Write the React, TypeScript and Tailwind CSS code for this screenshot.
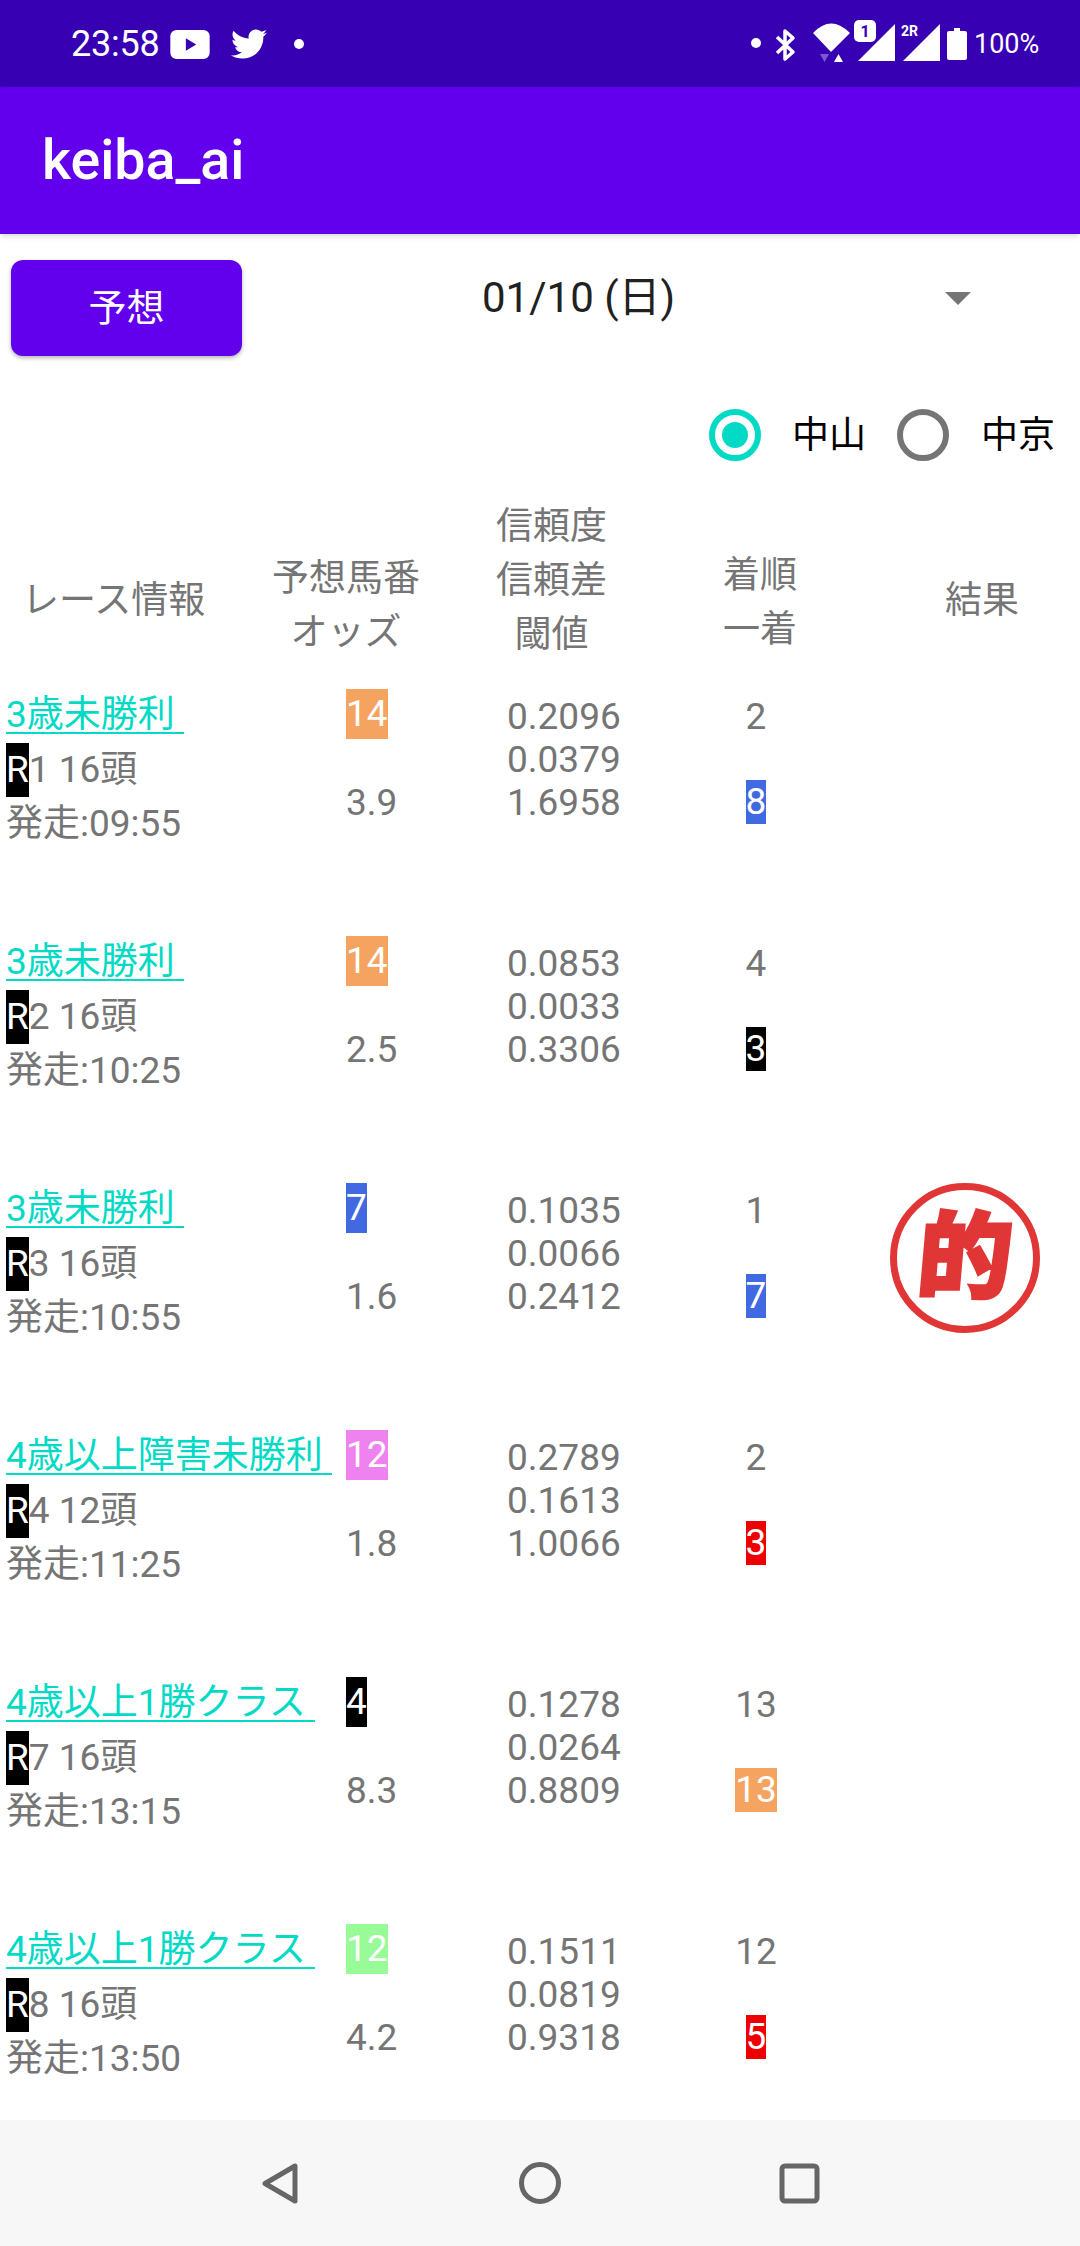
import { FaTwitter } from "react-icons/fa";

type Race = {
  name: string;
  round: string;
  start: string;
  pick: string;
  pickColor: string;
  odds: string;
  scores: string[];
  place: string;
  first: string;
  firstColor: string;
  hit?: boolean;
};

const races: Race[] = [
  { name: "3歳未勝利", round: "1 16頭", start: "発走:09:55", pick: "14", pickColor: "bg-[#f4a460]", odds: "3.9", scores: ["0.2096", "0.0379", "1.6958"], place: "2", first: "8", firstColor: "bg-[#4169e1]" },
  { name: "3歳未勝利", round: "2 16頭", start: "発走:10:25", pick: "14", pickColor: "bg-[#f4a460]", odds: "2.5", scores: ["0.0853", "0.0033", "0.3306"], place: "4", first: "3", firstColor: "bg-black" },
  { name: "3歳未勝利", round: "3 16頭", start: "発走:10:55", pick: "7", pickColor: "bg-[#4169e1]", odds: "1.6", scores: ["0.1035", "0.0066", "0.2412"], place: "1", first: "7", firstColor: "bg-[#4169e1]", hit: true },
  { name: "4歳以上障害未勝利", round: "4 12頭", start: "発走:11:25", pick: "12", pickColor: "bg-[#ee82ee]", odds: "1.8", scores: ["0.2789", "0.1613", "1.0066"], place: "2", first: "3", firstColor: "bg-[#ee0000]" },
  { name: "4歳以上1勝クラス", round: "7 16頭", start: "発走:13:15", pick: "4", pickColor: "bg-black", odds: "8.3", scores: ["0.1278", "0.0264", "0.8809"], place: "13", first: "13", firstColor: "bg-[#f4a460]" },
  { name: "4歳以上1勝クラス", round: "8 16頭", start: "発走:13:50", pick: "12", pickColor: "bg-[#98fb98]", odds: "4.2", scores: ["0.1511", "0.0819", "0.9318"], place: "12", first: "5", firstColor: "bg-[#ee0000]" },
];

function StatusBar() {
  return (
    <div className="flex h-[87px] shrink-0 items-center bg-[#3700b3] pl-[71px] text-white">
      <span className="w-[99px] text-[36px] leading-[42px] tracking-[-0.2px]">23:58</span>
      <svg width="40" height="29" viewBox="0 0 38 28" className="mt-[1px]">
        <path
          fillRule="evenodd"
          fill="#fff"
          d="M6 0h26a6 6 0 0 1 6 6v16a6 6 0 0 1-6 6H6a6 6 0 0 1-6-6V6a6 6 0 0 1 6-6ZM15 8v12l10-6Z"
        />
      </svg>
      <FaTwitter className="ml-[21px] text-[36px]" />
      <span className="ml-[27px] h-[10px] w-[10px] rounded-full bg-white" />
      <svg width="220" height="50" viewBox="750 18 220 50" className="ml-[445px] mt-[-1px]">
        <circle cx="757" cy="43" r="5" fill="#fff" />
        <path d="M778 37 794 52 786 59V31L794 38 778 53" fill="none" stroke="#fff" strokeWidth="3.5" strokeLinejoin="round" />
        <path d="M814 33Q832 14 851 33L832 52Z" fill="#fff" />
        <path d="M821 54h9l-4.500 8Z" fill="#fff" opacity="0.35" />
        <path d="M835 62h9l-4.500-8Z" fill="#fff" />
        <path d="M859 61 896 24V61Z" fill="#fff" />
        <rect x="855" y="20" width="22" height="22" rx="5" fill="#fff" />
        <text x="866" y="37" textAnchor="middle" fontSize="16" fontWeight="700" fill="#3700b3" fontFamily="Roboto">1</text>
        <path d="M904 61 941 24V61Z" fill="#fff" />
        <text x="902" y="36" fontSize="14" fontWeight="700" fill="#fff" fontFamily="Roboto">2R</text>
        <path d="M955 28h6v3h5a2 2 0 0 1 2 2v25a2 2 0 0 1-2 2h-16a2 2 0 0 1-2-2V33a2 2 0 0 1 2-2h5Z" fill="#fff" />
      </svg>
      <span className="ml-[5px] text-[27px] leading-[30px]">100%</span>
    </div>
  );
}

function Radio({ checked }: { checked?: boolean }) {
  return (
    <span className={`flex h-[52px] w-[52px] items-center justify-center rounded-full border-[6px] ${checked ? "border-[#03dac5]" : "border-[#757575]"}`}>
      {checked && <span className="h-[26px] w-[26px] rounded-full bg-[#03dac5]" />}
    </span>
  );
}

function HitStamp() {
  return (
    <div className="ml-[78px] mt-[3px] flex h-[150px] w-[150px] items-center justify-center rounded-full border-[7px] border-[#e03636]">
      <span className="-skew-x-[5deg] text-[94px] font-black leading-none text-[#e03636] [-webkit-text-stroke:3px_#e03636]">
        的
      </span>
    </div>
  );
}

function RaceRow({ race }: { race: Race }) {
  return (
    <div className="flex h-[247px] shrink-0 text-[37px] text-[#757575]">
      <div className="w-[346px] pl-[6px] pt-[2px] leading-[54.5px]">
        <div className="whitespace-pre text-[#03dac5] underline decoration-[2px] underline-offset-[5px]">{race.name} </div>
        <div className="flex">
          <span className="bg-black text-white">R</span>
          <span>{race.round}</span>
        </div>
        <div>{race.start}</div>
      </div>
      <div className="flex w-[161px] flex-col items-start pt-[3px]">
        <span className={`h-[50px] leading-[50px] text-white ${race.pickColor}`}>{race.pick}</span>
        <span className="mt-[42px] leading-[43px]">{race.odds}</span>
      </div>
      <div className="w-[193px] pt-[9px] leading-[43px]">
        {race.scores.map((score, i) => (
          <div key={i}>{score}</div>
        ))}
      </div>
      <div className="flex w-[112px] flex-col items-center pt-[9px]">
        <span className="leading-[43px]">{race.place}</span>
        <span className={`mt-[42px] h-[44px] leading-[44px] text-white ${race.firstColor}`}>{race.first}</span>
      </div>
      {race.hit && <HitStamp />}
    </div>
  );
}

export default function App() {
  return (
    <div className="flex h-[2246px] w-[1080px] flex-col overflow-hidden bg-white font-[Roboto,'Noto_Sans_CJK_JP',sans-serif]">
      <StatusBar />
      <header className="z-10 flex h-[147px] shrink-0 items-center bg-[#6200ee] pl-[42px] shadow-md">
        <h1 className="text-[55.5px] font-medium leading-[66px] text-white">keiba_ai</h1>
      </header>

      <div className="flex h-[175px] shrink-0 items-start pl-[11px] pt-[26px]">
        <button className="h-[96px] w-[231px] rounded-[12px] bg-[#6200ee] text-[38px] text-white shadow-[0_2px_4px_rgba(0,0,0,0.3)]">
          予想
        </button>
        <div className="ml-[241px] flex h-[76px] flex-1 items-center pr-[109px]">
          <span className="-ml-[1px] text-[42px] leading-[50px] text-[#212121]">01/10 (日)</span>
          <span className="ml-auto h-0 w-0 border-x-[13px] border-t-[13px] border-x-transparent border-t-[#757575]" />
        </div>
      </div>

      <div className="flex h-[89px] shrink-0 items-start justify-end pr-[25px] text-[37px] leading-[54px] text-black">
        <Radio checked />
        <span className="ml-[31px]">中山</span>
        <span className="ml-[31px]"><Radio /></span>
        <span className="ml-[32px]">中京</span>
      </div>

      <div className="flex h-[188px] shrink-0 whitespace-nowrap text-center text-[37px] leading-[54px] text-[#757575]">
        <div className="w-[274px] pl-[22px] pt-[76px] text-left">レース情報</div>
        <div className="w-[148px] -ml-[2px] pt-[54px]">予想馬番<br />オッズ</div>
        <div className="ml-[76px] w-[111px] pt-[2px]">信頼度<br />信頼差<br />閾値</div>
        <div className="ml-[115px] w-[76px] pt-[51px]">着順<br />一着</div>
        <div className="ml-[146px] w-[76px] pt-[76px]">結果</div>
      </div>

      <div className="flex min-h-0 flex-1 flex-col overflow-hidden">
        {races.map((race) => (
          <RaceRow key={race.round} race={race} />
        ))}
      </div>

      <nav className="flex h-[126px] shrink-0 items-center bg-[#f7f7f7]">
        <svg width="1080" height="126" viewBox="0 2120 1080 126" fill="none" stroke="#666" strokeWidth="5" strokeLinejoin="round">
          <path d="M295 2166V2201L265 2183.500Z" />
          <circle cx="540" cy="2183" r="18.500" />
          <rect x="782" y="2166" width="35" height="35" rx="3" />
        </svg>
      </nav>
    </div>
  );
}
